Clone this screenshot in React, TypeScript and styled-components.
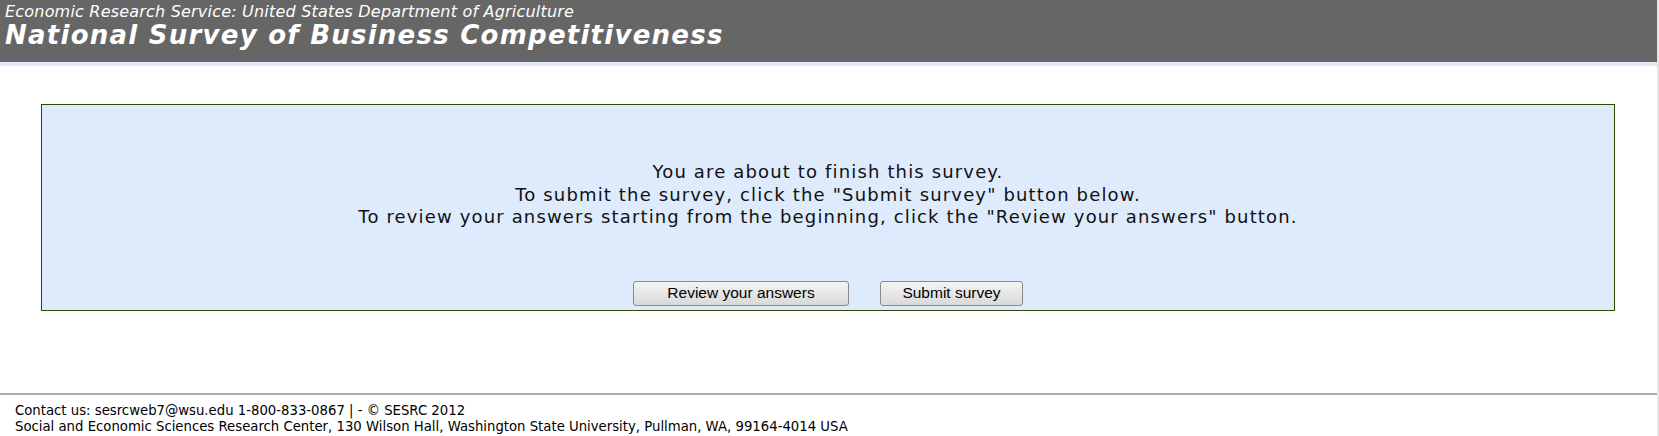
import React from 'react';
import styled, { createGlobalStyle } from 'styled-components';

const GlobalStyle = createGlobalStyle`
    html, body {
        margin: 0;
        padding: 0;
        background: #ffffff;
    }
`;

const Page = styled.div`
    width: 1657px;
    min-height: 436px;
    border-right: 2px solid #e4e4e4;
    display: flex;
    flex-direction: column;
    font-family: 'DejaVu Sans', Verdana, sans-serif;
`;

const Header = styled.header`
    background: #666666;
    height: 60px;
    padding: 2px 0 0 5px;
    border-bottom: 4px solid #dde9f8;
    color: #ffffff;
    display: flex;
    flex-direction: column;
`;

const Agency = styled.div`
    font-size: 16px;
    font-style: italic;
    line-height: 20px;
    letter-spacing: 0.2px;
`;

const Title = styled.h1`
    margin: 0;
    font-size: 26px;
    font-weight: bold;
    font-style: italic;
    line-height: 26px;
    letter-spacing: 1.25px;
`;

const Main = styled.main`
    padding: 38px 42px 0 41px;
`;

const Panel = styled.section`
    background: #ddebfc;
    border: 1px solid #2f4a00;
    height: 207px;
    display: flex;
    flex-direction: column;
    align-items: center;
    padding-top: 56px;
    box-sizing: border-box;
`;

const Message = styled.p`
    margin: 0;
    font-size: 18px;
    line-height: 22.5px;
    letter-spacing: 1.15px;
    text-align: center;
    color: #111111;
`;

const Actions = styled.div`
    display: flex;
    gap: 31px;
    margin-top: 52px;
`;

const Button = styled.button<{ $width: number }>`
    width: ${({ $width }) => $width}px;
    height: 25px;
    font-family: 'Liberation Sans', Arial, sans-serif;
    font-size: 15.5px;
    color: #000000;
    border: 1px solid #8a8a8a;
    border-radius: 3px;
    background: linear-gradient(#f4f4f4, #d9d9d9);
    padding: 0;
`;

const Footer = styled.footer`
    margin-top: 82px;
    border-top: 2px solid #ababab;
    padding: 8px 0 0 15px;
    font-size: 13.25px;
    line-height: 16.4px;
    color: #000000;
`;

export default function App() {
    return (
        <>
            <GlobalStyle />
            <Page>
                <Header>
                    <Agency>Economic Research Service: United States Department of Agriculture</Agency>
                    <Title>National Survey of Business Competitiveness</Title>
                </Header>
                <Main>
                    <Panel>
                        <Message>
                            You are about to finish this survey.
                            <br />
                            To submit the survey, click the "Submit survey" button below.
                            <br />
                            To review your answers starting from the beginning, click the "Review your answers" button.
                        </Message>
                        <Actions>
                            <Button $width={216}>Review your answers</Button>
                            <Button $width={143}>Submit survey</Button>
                        </Actions>
                    </Panel>
                </Main>
                <Footer>
                    Contact us: sesrcweb7@wsu.edu 1-800-833-0867 | - © SESRC 2012
                    <br />
                    Social and Economic Sciences Research Center, 130 Wilson Hall, Washington State University, Pullman, WA, 99164-4014 USA
                </Footer>
            </Page>
        </>
    );
}
